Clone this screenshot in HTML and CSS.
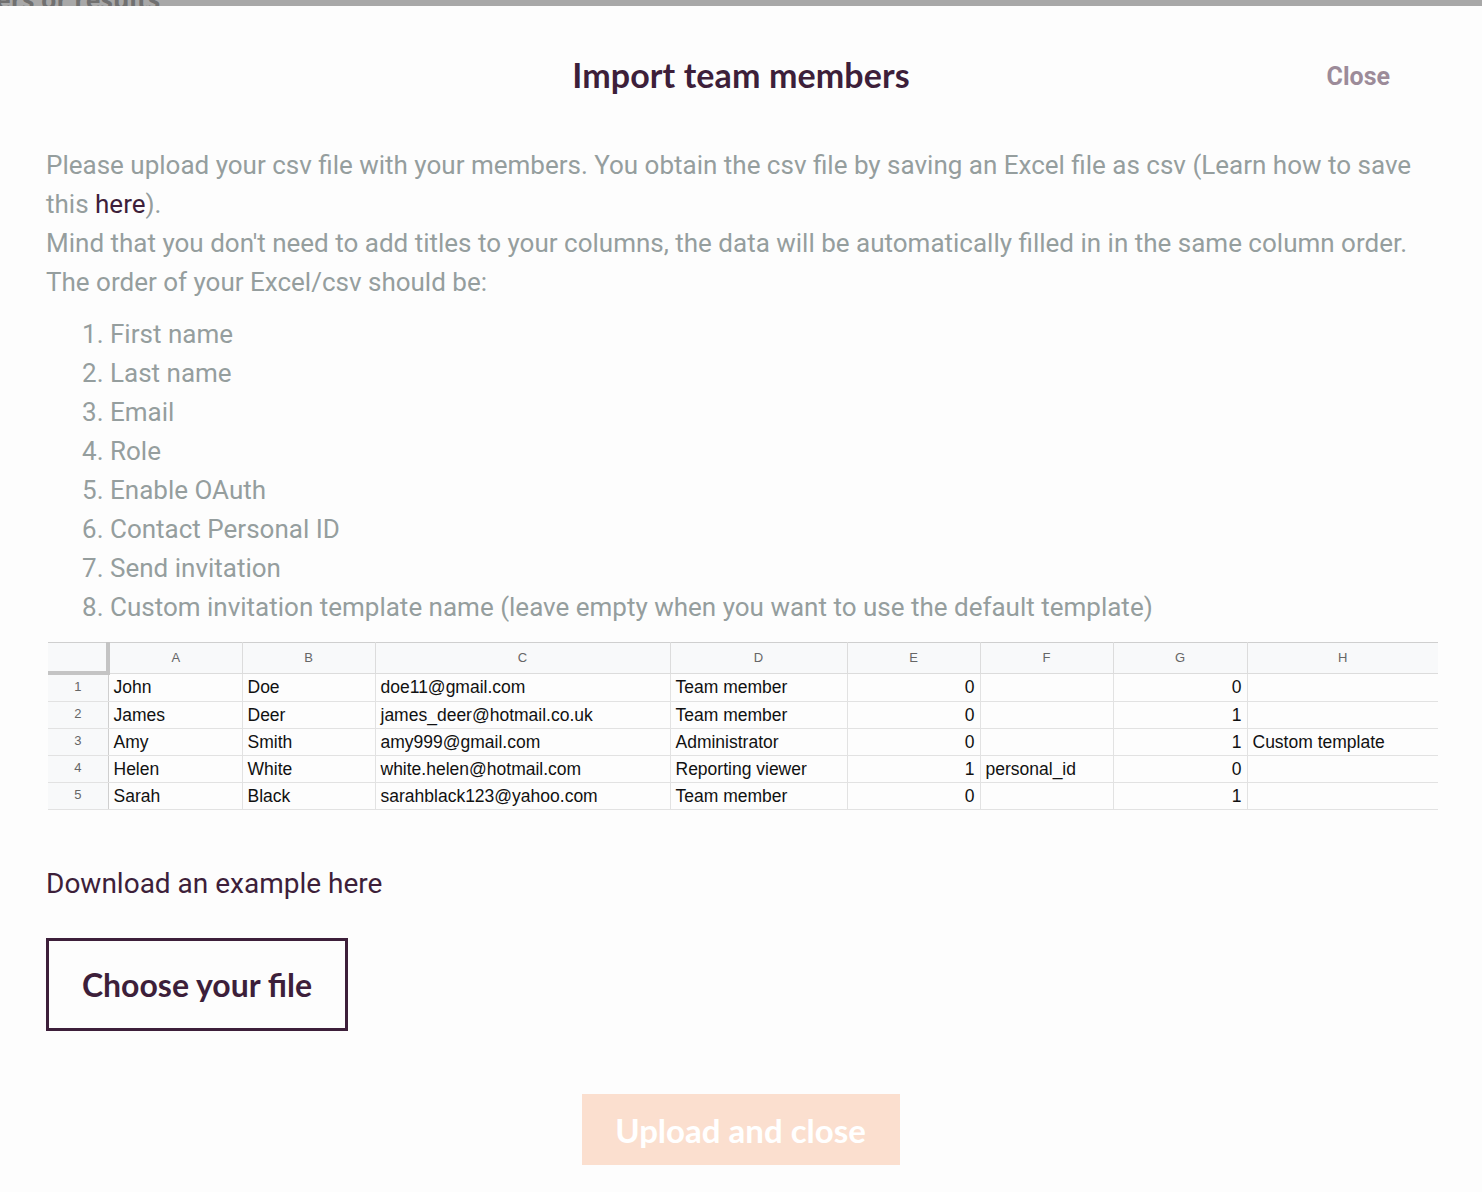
FILE: index.html
```html
<!DOCTYPE html>
<html>
<head>
<meta charset="utf-8">
<link rel="stylesheet" href="styles.css">
</head>
<body>
<div class="topbar"><span class="topbar-text">ers or results</span></div>
<div class="modal">
  <div class="header">
    <h1 class="title">Import team members</h1>
    <a class="close">Close</a>
  </div>
  <div class="content">
    <p class="text">Please upload your csv file with your members. You obtain the csv file by saving an Excel file as csv (Learn how to save this <a class="link">here</a>).<br>Mind that you don't need to add titles to your columns, the data will be automatically filled in in the same column order.<br>The order of your Excel/csv should be:</p>
    <ol class="list">
      <li>First name</li>
      <li>Last name</li>
      <li>Email</li>
      <li>Role</li>
      <li>Enable OAuth</li>
      <li>Contact Personal ID</li>
      <li>Send invitation</li>
      <li>Custom invitation template name (leave empty when you want to use the default template)</li>
    </ol>
    <table class="sheet">
      <colgroup>
        <col class="c0"><col class="c1"><col class="c2"><col class="c3"><col class="c4"><col class="c5"><col class="c6"><col class="c7"><col class="c8">
      </colgroup>
      <thead>
        <tr><th class="corner"></th><th>A</th><th>B</th><th>C</th><th>D</th><th>E</th><th>F</th><th>G</th><th>H</th></tr>
      </thead>
      <tbody>
        <tr><td class="rn">1</td><td>John</td><td>Doe</td><td>doe11@gmail.com</td><td>Team member</td><td class="num">0</td><td></td><td class="num">0</td><td></td></tr>
        <tr><td class="rn">2</td><td>James</td><td>Deer</td><td>james_deer@hotmail.co.uk</td><td>Team member</td><td class="num">0</td><td></td><td class="num">1</td><td></td></tr>
        <tr><td class="rn">3</td><td>Amy</td><td>Smith</td><td>amy999@gmail.com</td><td>Administrator</td><td class="num">0</td><td></td><td class="num">1</td><td>Custom template</td></tr>
        <tr><td class="rn">4</td><td>Helen</td><td>White</td><td>white.helen@hotmail.com</td><td>Reporting viewer</td><td class="num">1</td><td>personal_id</td><td class="num">0</td><td></td></tr>
        <tr><td class="rn">5</td><td>Sarah</td><td>Black</td><td>sarahblack123@yahoo.com</td><td>Team member</td><td class="num">0</td><td></td><td class="num">1</td><td></td></tr>
      </tbody>
    </table>
    <p class="download">Download an example here</p>
    <button class="choose">Choose your file</button>
    <div class="footer">
      <button class="upload">Upload and close</button>
    </div>
  </div>
</div>
</body>
</html>
```
FILE: styles.css
```css
html, body {
  margin: 0;
  padding: 0;
}
body {
  background: #fdfdfd;
  font-family: Roboto, "Liberation Sans", sans-serif;
  width: 1482px;
  height: 1192px;
  overflow: hidden;
}
.topbar {
  height: 6px;
  background: #a8a8a8;
  overflow: hidden;
  position: relative;
}
.topbar-text {
  position: absolute;
  left: -4px;
  top: -18px;
  font-family: "Open Sans", sans-serif;
  font-weight: 700;
  font-size: 25px;
  color: #707070;
}
.modal {
  background: #fdfdfd;
}
.header {
  position: relative;
  height: 140px;
  display: flex;
  justify-content: center;
}
.title {
  margin: 0;
  padding-top: 48px;
  font-family: Lato, sans-serif;
  font-weight: 700;
  font-size: 34px;
  color: #3d1f3a;
  letter-spacing: 0.1px;
}
.close {
  position: absolute;
  right: 92px;
  top: 56px;
  font-family: Roboto, sans-serif;
  font-weight: 700;
  font-size: 25px;
  color: #9c8b99;
}
.content {
  padding: 0 44px 0 46px;
}
.text {
  margin: 0;
  font-size: 26px;
  line-height: 39px;
  color: #959e9e;
}
.link {
  color: #3d1f3a;
}
.list {
  margin: 13px 0 0;
  padding-left: 64px;
  font-size: 26px;
  line-height: 39px;
  color: #959e9e;
}
.list li {
  padding-left: 0;
}
.sheet {
  margin-top: 15px;
  margin-left: 2px;
  border-collapse: collapse;
  table-layout: fixed;
  width: 1390px;
  font-family: "Liberation Sans", Arial, sans-serif;
  font-size: 17.5px;
  color: #111;
}
.c0 { width: 60px; }
.c1 { width: 134px; }
.c2 { width: 133px; }
.c3 { width: 295px; }
.c4 { width: 177px; }
.c5 { width: 133px; }
.c6 { width: 133px; }
.c7 { width: 134px; }
.c8 { width: 191px; }
.sheet th {
  height: 28px;
  background: #f8f9fa;
  border: 1px solid #dcdcdc;
  border-top: 1px solid #cfcfcf;
  font-weight: 400;
  font-size: 13px;
  color: #666;
  padding: 0;
}
.sheet th.corner {
  border-right: 4px solid #c4c4c4;
  border-bottom: 4px solid #c4c4c4;
  border-left: none;
}
.sheet th:last-child {
  border-right: none;
}
.sheet td {
  height: 26px;
  border: 1px solid #e2e2e2;
  padding: 0 5px;
  white-space: nowrap;
  overflow: hidden;
}
.sheet td:last-child {
  border-right: none;
}
.sheet td.rn {
  background: #f8f9fa;
  text-align: center;
  font-size: 13px;
  color: #666;
  border-left: none;
  border-right: 1px solid #cfcfcf;
  vertical-align: top;
  padding-top: 4px;
  height: 22px;
}
.sheet td.num {
  text-align: right;
}
.download {
  margin: 56px 0 0;
  font-size: 28px;
  line-height: 36px;
  color: #3d1f3a;
}
.choose {
  margin-top: 36px;
  width: 302px;
  height: 93px;
  background: transparent;
  border: 3px solid #3d1f3a;
  font-family: Lato, sans-serif;
  font-weight: 700;
  font-size: 32px;
  color: #3d1f3a;
  padding: 0;
}
.footer {
  display: flex;
  justify-content: center;
  margin-top: 63px;
  padding-right: 3px;
}
.upload {
  width: 318px;
  height: 71px;
  background: #fbdfcf;
  border: none;
  font-family: Lato, sans-serif;
  font-weight: 700;
  font-size: 33px;
  color: #ffffff;
  padding: 0;
}
```
